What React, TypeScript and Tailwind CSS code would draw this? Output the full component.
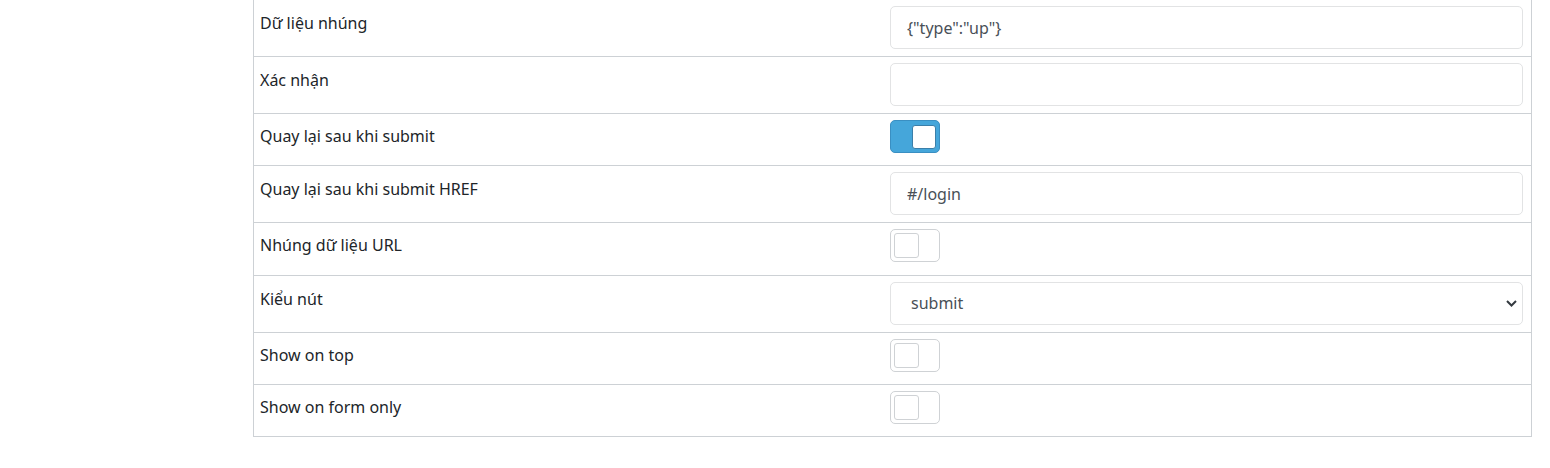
import React from "react";

type Row =
  | { label: string; kind: "input"; value: string }
  | { label: string; kind: "toggle"; on: boolean }
  | { label: string; kind: "select"; value: string };

const rows: Row[] = [
  { label: "Dữ liệu nhúng", kind: "input", value: '{"type":"up"}' },
  { label: "Xác nhận", kind: "input", value: "" },
  { label: "Quay lại sau khi submit", kind: "toggle", on: true },
  { label: "Quay lại sau khi submit HREF", kind: "input", value: "#/login" },
  { label: "Nhúng dữ liệu URL", kind: "toggle", on: false },
  { label: "Kiểu nút", kind: "select", value: "submit" },
  { label: "Show on top", kind: "toggle", on: false },
  { label: "Show on form only", kind: "toggle", on: false },
];

function Toggle({ on }: { on: boolean }) {
  if (on) {
    return (
      <div className="flex h-[33px] w-[50px] items-center justify-end rounded-[5px] border border-[#3a8fc2] bg-[#45a6da] pr-[3px]">
        <div className="h-[24px] w-[24px] rounded-[3px] border border-[#3b7fa9] bg-white" />
      </div>
    );
  }
  return (
    <div className="flex h-[33px] w-[50px] items-center rounded-[5px] border border-[#cfd2d5] bg-white pl-[3px]">
      <div className="h-[25px] w-[25px] rounded-[3px] border border-[#cfd2d5] bg-white" />
    </div>
  );
}

function Field({ row }: { row: Row }) {
  if (row.kind === "toggle") return <Toggle on={row.on} />;
  if (row.kind === "select") {
    return (
      <div className="relative">
        <select
          value={row.value}
          onChange={() => {}}
          className="h-[43px] w-full appearance-none rounded-[5px] border border-[#e2e3e4] bg-white pl-[20px] text-[16px] text-[#495057] outline-none"
        >
          <option value="submit">submit</option>
          <option value="button">button</option>
        </select>
        <svg
          className="pointer-events-none absolute right-[6px] top-[18px]"
          width="11"
          height="7"
          viewBox="0 0 11 7"
          fill="none"
        >
          <path d="M1 1l4.5 4.5L10 1" stroke="#343a40" strokeWidth="2" />
        </svg>
      </div>
    );
  }
  return (
    <input
      readOnly
      value={row.value}
      className="h-[43px] w-full rounded-[5px] border border-[#e2e3e4] bg-white px-[16px] text-[16px] text-[#495057] outline-none"
    />
  );
}

export default function App() {
  return (
    <div className="h-[468px] w-[1550px] bg-white font-['Noto_Sans',sans-serif] text-[16px] leading-[24px] text-[#212529]">
      <div className="ml-[253px] w-[1279px] border-x border-[#cdd1d5]">
        {rows.map((row) => {
          const isToggle = row.kind === "toggle";
          return (
            <div key={row.label} className="flex border-b border-[#cdd1d5]">
              <div
                className={
                  isToggle
                    ? "w-[630px] shrink-0 pl-[6px] pt-[10px]"
                    : "w-[630px] shrink-0 pl-[6px] pt-[11px]"
                }
              >
                {row.label}
              </div>
              <div
                className={
                  isToggle
                    ? "flex-1 pb-[12.3px] pl-[6px] pr-[8px] pt-[6px]"
                    : "flex-1 pb-[7px] pl-[6px] pr-[8px] pt-[6px]"
                }
              >
                <Field row={row} />
              </div>
            </div>
          );
        })}
      </div>
    </div>
  );
}
